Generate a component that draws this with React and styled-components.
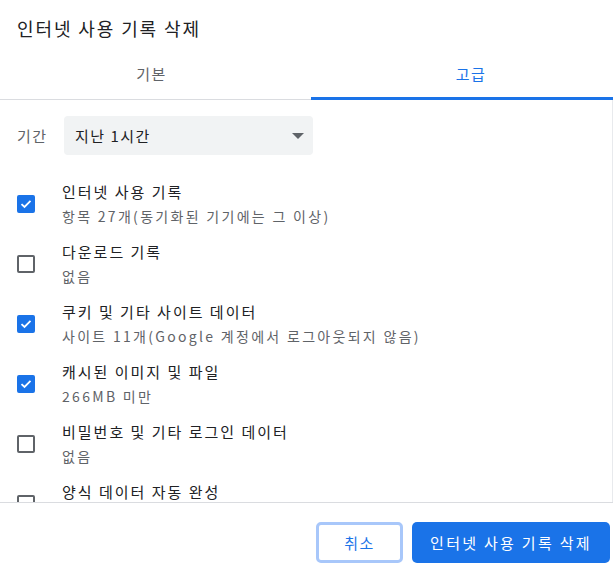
import React from 'react';
import styled, { createGlobalStyle } from 'styled-components';

const GlobalStyle = createGlobalStyle`
  html, body {
    margin: 0;
    padding: 0;
    background: #ffffff;
  }
  body {
    font-family: "Noto Sans CJK KR", "Noto Sans", "Liberation Sans", sans-serif;
    color: #202124;
    overflow: hidden;
  }
`;

const Dialog = styled.div`
  width: 613px;
  height: 586px;
  display: flex;
  flex-direction: column;
  background: #ffffff;
`;

const Title = styled.h1`
  margin: 0;
  height: 50px;
  padding: 6px 17px 0;
  display: flex;
  align-items: center;
  box-sizing: border-box;
  font-size: 18px;
  letter-spacing: 1.9px;
  font-weight: 400;
  color: #202124;
`;

const Tabs = styled.div`
  display: flex;
  height: 50px;
  border-bottom: 1px solid #dadce0;
  box-sizing: border-box;
`;

const Tab = styled.div`
  width: ${p => p.$width || 'auto'};
  flex: ${p => (p.$width ? 'none' : '1')};
  display: flex;
  align-items: center;
  justify-content: center;
  padding: ${p => p.$pad};
  box-sizing: border-box;
  font-size: 15px;
  letter-spacing: 1.5px;
  color: ${p => (p.$active ? '#1a73e8' : '#5f6368')};
  border-bottom: 3px solid ${p => (p.$active ? '#1a73e8' : 'transparent')};
  margin-bottom: -1px;
`;

const Content = styled.div`
  flex: 1;
  overflow: hidden;
  padding: 16px 0 0 17px;
  border-right: 1px solid #e8eaed;
  box-sizing: border-box;
`;

const PeriodRow = styled.div`
  display: flex;
  align-items: center;
  gap: 16px;
  margin-bottom: 19px;
`;

const Label = styled.span`
  font-size: 15px;
  letter-spacing: 1.5px;
  color: #5f6368;
  width: 31px;
`;

const Select = styled.div`
  width: 249px;
  height: 39px;
  background: #f1f3f4;
  border-radius: 4px;
  display: flex;
  align-items: center;
  justify-content: space-between;
  padding: 0 9px 0 11px;
  box-sizing: border-box;
  font-size: 15px;
  letter-spacing: 1.5px;
  color: #202124;
`;

const Caret = styled.span`
  width: 0;
  height: 0;
  border-left: 6px solid transparent;
  border-right: 6px solid transparent;
  border-top: 6px solid #5f6368;
`;

const Row = styled.div`
  display: flex;
  align-items: center;
  height: 60px;
  gap: 27px;
`;

const Box = styled.span`
  flex: none;
  width: 18px;
  height: 18px;
  box-sizing: border-box;
  border-radius: 2px;
  display: flex;
  align-items: center;
  justify-content: center;
  background: ${p => (p.$checked ? '#1a73e8' : '#ffffff')};
  border: 2px solid ${p => (p.$checked ? '#1a73e8' : '#5f6368')};
`;

const Texts = styled.div`
  display: flex;
  flex-direction: column;
`;

const ItemTitle = styled.span`
  font-size: 15px;
  letter-spacing: 2px;
  line-height: 24px;
  color: #202124;
`;

const ItemSub = styled.span`
  font-size: 14px;
  letter-spacing: 2.3px;
  line-height: 24px;
  color: #5f6368;
`;

const Footer = styled.div`
  height: 84px;
  border-top: 1px solid #dadce0;
  box-sizing: border-box;
  display: flex;
  justify-content: flex-end;
  align-items: flex-start;
  gap: 9px;
  padding: 19px 3px 0 0;
`;

const Button = styled.button`
  height: 41px;
  padding: 0;
  border-radius: 5px;
  font-family: inherit;
  font-size: 15px;
  letter-spacing: ${p => (p.$primary ? '2.3px' : '1.5px')};
  box-sizing: border-box;
  cursor: pointer;
  background: ${p => (p.$primary ? '#1a73e8' : '#ffffff')};
  color: ${p => (p.$primary ? '#ffffff' : '#1a73e8')};
  border: ${p => (p.$primary ? 'none' : '3px solid #a8c7fa')};
  width: ${p => p.$width};
`;

const Check = () => (
  <svg width="12" height="10" viewBox="0 0 12 10">
    <path d="M1.5 5.2 L4.5 8 L10.5 1.8" fill="none" stroke="#ffffff" strokeWidth="1.8" />
  </svg>
);

const items = [
  { title: '인터넷 사용 기록', sub: '항목 27개(동기화된 기기에는 그 이상)', checked: true },
  { title: '다운로드 기록', sub: '없음', checked: false },
  { title: '쿠키 및 기타 사이트 데이터', sub: '사이트 11개(Google 계정에서 로그아웃되지 않음)', checked: true },
  { title: '캐시된 이미지 및 파일', sub: '266MB 미만', checked: true },
  { title: '비밀번호 및 기타 로그인 데이터', sub: '없음', checked: false },
  { title: '양식 데이터 자동 완성', sub: '', checked: false },
];

export default function App() {
  return (
    <Dialog>
      <GlobalStyle />
      <Title>인터넷 사용 기록 삭제</Title>
      <Tabs>
        <Tab $width="311px" $pad="0 8px 0 0">기본</Tab>
        <Tab $active $pad="0 0 0 18px">고급</Tab>
      </Tabs>
      <Content>
        <PeriodRow>
          <Label>기간</Label>
          <Select>
            <span>지난 1시간</span>
            <Caret />
          </Select>
        </PeriodRow>
        {items.map(item => (
          <Row key={item.title}>
            <Box $checked={item.checked}>{item.checked && <Check />}</Box>
            <Texts>
              <ItemTitle>{item.title}</ItemTitle>
              <ItemSub>{item.sub || '\u00a0'}</ItemSub>
            </Texts>
          </Row>
        ))}
      </Content>
      <Footer>
        <Button $width="87px">취소</Button>
        <Button $primary $width="198px">인터넷 사용 기록 삭제</Button>
      </Footer>
    </Dialog>
  );
}
